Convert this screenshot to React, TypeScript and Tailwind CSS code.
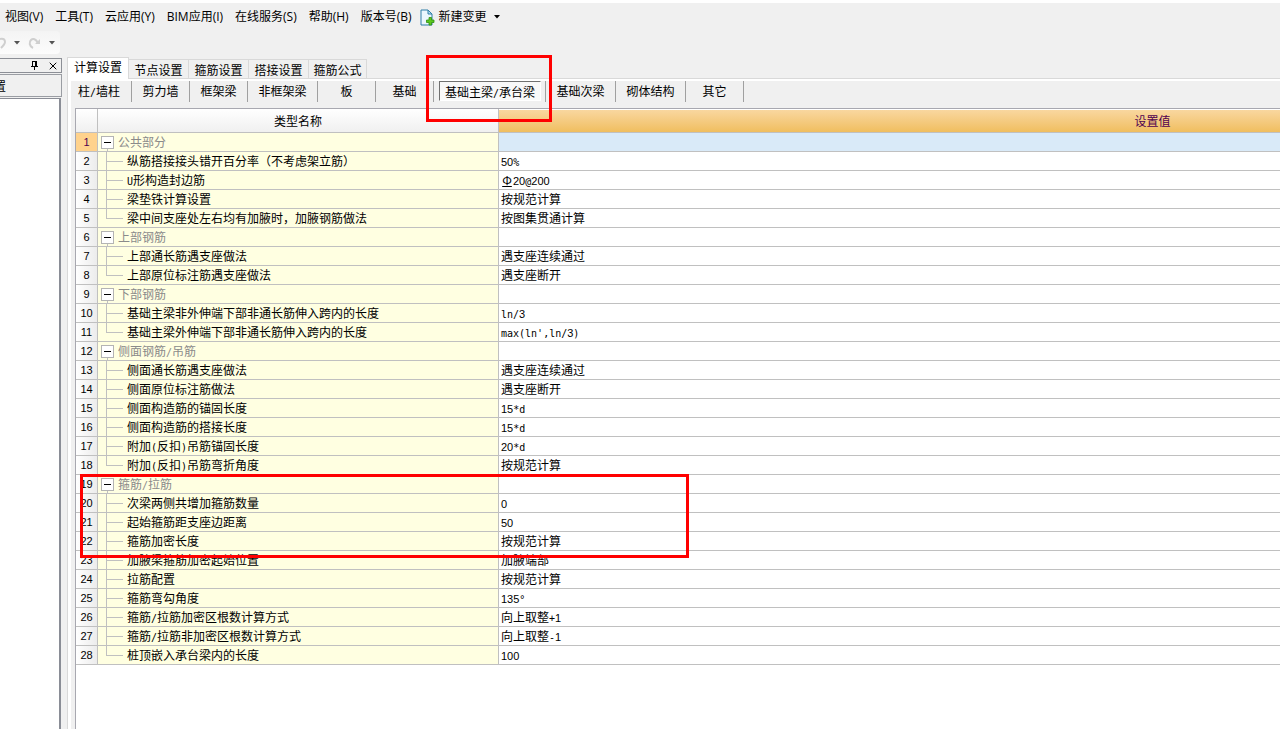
import { X } from "lucide-react"

interface Row {
  name: string
  value?: string
  group?: boolean
  last?: boolean
}

const menus = ["视图(V)", "工具(T)", "云应用(Y)", "BIM应用(I)", "在线服务(S)", "帮助(H)", "版本号(B)"]

const tabs = [
  { label: "计算设置", width: "w-[62px]" },
  { label: "节点设置", width: "w-[60px]" },
  { label: "箍筋设置", width: "w-[60px]" },
  { label: "搭接设置", width: "w-[60px]" },
  { label: "箍筋公式", width: "w-[58px]" },
]

const members = [
  { label: "柱/墙柱", width: "w-[61px] pr-1" },
  { label: "剪力墙", width: "w-[58px]" },
  { label: "框架梁", width: "w-[58px]" },
  { label: "非框架梁", width: "w-[70px]" },
  { label: "板", width: "w-[58px]" },
  { label: "基础", width: "w-[58px]" },
  { label: "基础主梁/承台梁", width: "w-[112px]" },
  { label: "基础次梁", width: "w-[70px]" },
  { label: "砌体结构", width: "w-[70px]" },
  { label: "其它", width: "w-[58px]" },
]

const rows: Row[] = [
  { name: "公共部分", group: true },
  { name: "纵筋搭接接头错开百分率（不考虑架立筋）", value: "50%" },
  { name: "U形构造封边筋", value: "Φ20@200" },
  { name: "梁垫铁计算设置", value: "按规范计算" },
  { name: "梁中间支座处左右均有加腋时，加腋钢筋做法", value: "按图集贯通计算", last: true },
  { name: "上部钢筋", group: true },
  { name: "上部通长筋遇支座做法", value: "遇支座连续通过" },
  { name: "上部原位标注筋遇支座做法", value: "遇支座断开", last: true },
  { name: "下部钢筋", group: true },
  { name: "基础主梁非外伸端下部非通长筋伸入跨内的长度", value: "ln/3" },
  { name: "基础主梁外伸端下部非通长筋伸入跨内的长度", value: "max(ln',ln/3)", last: true },
  { name: "侧面钢筋/吊筋", group: true },
  { name: "侧面通长筋遇支座做法", value: "遇支座连续通过" },
  { name: "侧面原位标注筋做法", value: "遇支座断开" },
  { name: "侧面构造筋的锚固长度", value: "15*d" },
  { name: "侧面构造筋的搭接长度", value: "15*d" },
  { name: "附加(反扣)吊筋锚固长度", value: "20*d" },
  { name: "附加(反扣)吊筋弯折角度", value: "按规范计算", last: true },
  { name: "箍筋/拉筋", group: true },
  { name: "次梁两侧共增加箍筋数量", value: "0" },
  { name: "起始箍筋距支座边距离", value: "50" },
  { name: "箍筋加密长度", value: "按规范计算" },
  { name: "加腋梁箍筋加密起始位置", value: "加腋端部" },
  { name: "拉筋配置", value: "按规范计算" },
  { name: "箍筋弯勾角度", value: "135°" },
  { name: "箍筋/拉筋加密区根数计算方式", value: "向上取整+1" },
  { name: "箍筋/拉筋非加密区根数计算方式", value: "向上取整-1" },
  { name: "桩顶嵌入承台梁内的长度", value: "100", last: true },
]

// Latin runs take half the width of a Chinese character
function Mixed({ text }: { text: string }) {
  return (
    <>
      {text.split(/(\d+|[\x20-\x2f\x3a-\x7e°]+|Φ)/).map((part, i) => {
        if (i % 2 === 0) return part
        if (part === "Φ") {
          return (
            <span key={i} className="inline-block w-3 text-center leading-none underline">
              {part}
            </span>
          )
        }
        return /\d/.test(part) ? (
          <span key={i} className="font-['Liberation_Sans',sans-serif] text-[11px] leading-none">
            {part}
          </span>
        ) : (
          <span key={i} className="font-['DejaVu_Sans_Mono',monospace] text-[10px] leading-none">
            {part}
          </span>
        )
      })}
    </>
  )
}

function Caret({ className }: { className: string }) {
  return (
    <svg className={className} width="6" height="4" viewBox="0 0 6 4" fill="currentColor">
      <path d="M0 0h6L3 3.5z" />
    </svg>
  )
}

function NewDocIcon() {
  return (
    <svg width="15" height="17" viewBox="0 0 15 17">
      <path d="M1 1h7l4 4v11H1z" fill="#eaf6fd" stroke="#2f7fa8" />
      <path d="M8 1v4h4z" fill="#b5dcf0" stroke="#2f7fa8" />
      <path d="M9 8.500h2.500V11H14v2.500h-2.500V16H9v-2.500H6.500V11H9z" fill="#5cc81e" stroke="#2f8f12" strokeWidth="0.8" />
    </svg>
  )
}

function MenuBar() {
  return (
    <nav className="flex h-[31px] items-center gap-3 border-t-[3px] border-white pl-[5px] font-['Open_Sans','Noto_Sans_CJK_SC',sans-serif]">
      {menus.map((m) => (
        <button key={m} className="whitespace-nowrap">
          {m}
        </button>
      ))}
      <button className="-ml-1 flex items-center gap-1 whitespace-nowrap">
        <NewDocIcon />
        新建变更
        <Caret className="ml-[3px]" />
      </button>
    </nav>
  )
}

function ToolBar() {
  return (
    <div className="flex h-[23px] w-[60px] items-center rounded-r bg-linear-to-b from-[#f4f4f4] to-[#fcfcfc]">
      <button aria-label="撤销" className="flex items-center text-[#cfcfcf]">
        <svg width="7" height="12" viewBox="0 0 7 12" fill="none" stroke="currentColor" strokeWidth="2">
          <path d="M0 2c4-1 5 1 5 3S3 9 1 11" />
        </svg>
        <Caret className="ml-[7px] text-[#555]" />
      </button>
      <button aria-label="恢复" className="ml-2 flex items-center text-[#cfcfcf]">
        <svg width="14" height="12" viewBox="0 0 14 12" fill="none" stroke="currentColor" strokeWidth="2">
          <path d="M5 11C1 9 1 5 3 3s5-1 7 3" />
          <path d="M12 2v5H7z" fill="currentColor" stroke="none" />
        </svg>
        <Caret className="ml-[7px] text-[#555]" />
      </button>
    </div>
  )
}

function SidePanel() {
  return (
    <aside className="flex w-[62px] shrink-0 flex-col">
      <div className="flex h-[15px] items-center justify-end gap-[8px] border border-l-0 border-[#8c8f96] pr-[2px]">
        <button aria-label="固定">
          <svg width="9" height="9" viewBox="0 0 9 9" fill="none" stroke="#000">
            <path d="M2.500 0v5M2 .5h4M5.500 0v5M6.500 0v5M1 5.500h7M4.500 6v3" />
          </svg>
        </button>
        <button aria-label="关闭">
          <X className="h-[12px] w-[12px]" strokeWidth={2} />
        </button>
      </div>
      <div className="mt-px flex h-[23px] items-center overflow-hidden border border-l-0 border-[#9a9da3]">
        <span className="-ml-[6px]">置</span>
      </div>
      <div className="mr-px mt-px flex-1 border-r-2 border-t border-[#8a8d96] bg-white" />
    </aside>
  )
}

function MemberTabs() {
  return (
    <div className="flex h-[21px]">
      {members.map((m) => {
        const active = m.label === "基础主梁/承台梁"
        return (
          <div key={m.label} className={`shrink-0 border-r border-[#a0a0a0] ${m.width}`}>
            {active ? (
              <button
                aria-pressed="true"
                className="ml-[5px] block h-[20px] w-[102px] whitespace-nowrap border border-b-white border-l-[#707070] border-r-white border-t-[#707070] bg-[#f8f8f8] text-center leading-[20px]"
              >
                <Mixed text={m.label} />
              </button>
            ) : (
              <button className="block h-[20px] w-full whitespace-nowrap text-center leading-[20px]">
                <Mixed text={m.label} />
              </button>
            )}
          </div>
        )
      })}
    </div>
  )
}

function NameCell({ row }: { row: Row }) {
  if (row.group) {
    return (
      <div className="flex h-[18px] pl-[3px] text-[#8a8a8a]">
        <div className="flex flex-col items-center justify-end">
          <button aria-label="折叠" className="flex h-[13px] w-[13px] items-center justify-center border border-[#b4b4b4] bg-white">
            <span className="h-px w-[7px] bg-black" />
          </button>
          <span className="h-[2px] w-px bg-[#c0c0c0]" />
        </div>
        <span className="ml-1 leading-[18px]">
          <Mixed text={row.name} />
        </span>
      </div>
    )
  }
  return (
    <div className="flex h-[18px] pl-2">
      <div className="w-[17px]">
        <div className="h-[10px] border-b border-l border-[#c0c0c0]" />
        {!row.last && <div className="h-[8px] border-l border-[#c0c0c0]" />}
      </div>
      <span className="ml-1 whitespace-nowrap leading-[18px]">
        <Mixed text={row.name} />
      </span>
    </div>
  )
}

function SettingsTable() {
  return (
    <table className="w-[1730px] table-fixed border-separate border-spacing-0">
      <colgroup>
        <col className="w-[22px]" />
        <col className="w-[401px]" />
        <col />
      </colgroup>
      <thead>
        <tr className="h-[24px]">
          <th className="border-b border-r border-[#c0c0c0] bg-linear-to-b from-white to-[#f0f0f0] p-0" />
          <th className="border-b border-r border-[#c0c0c0] bg-linear-to-b from-white to-[#f0f0f0] p-0 font-normal">
            类型名称
          </th>
          <th className="border-b border-t border-b-[#c0c0c0] border-t-white bg-linear-to-b from-[#f9d79f] to-[#f0be5e] p-0 font-normal text-[#500050]">
            设置值
          </th>
        </tr>
      </thead>
      <tbody>
        {rows.map((row, i) => (
          <tr key={i}>
            <th
              scope="row"
              className={`h-[19px] border-b border-r border-[#c0c0c0] p-0 text-center font-['Liberation_Sans',sans-serif] text-[11px] font-normal leading-[18px] ${
                i === 0 ? "bg-[#ffd28c] text-[#500050]" : "bg-linear-to-r from-white to-[#ececec]"
              }`}
            >
              {i + 1}
            </th>
            <td className="border-b border-r border-[#c0c0c0] bg-[#ffffe1] p-0">
              <NameCell row={row} />
            </td>
            <td className={`border-b border-[#c0c0c0] p-0 pl-[2px] leading-[18px] ${i === 0 ? "bg-[#d9eaf8]" : "bg-white"}`}>
              {row.value && <Mixed text={row.value} />}
            </td>
          </tr>
        ))}
      </tbody>
    </table>
  )
}

export default function App() {
  return (
    <div className="relative flex min-h-screen flex-col overflow-hidden bg-[#f0f0f0] font-['Noto_Sans_CJK_SC',sans-serif] text-[12px] leading-[18px] text-black">
      <MenuBar />
      <ToolBar />
      <div className="flex flex-1 pt-1">
        <SidePanel />
        <main className="ml-[5px] flex min-w-0 flex-1 flex-col">
          <div className="flex h-[21px] items-end border-b border-[#d9d9d9]" role="tablist">
            {tabs.map((t, i) => (
              <button
                key={t.label}
                role="tab"
                aria-selected={i === 0}
                className={`shrink-0 border-t border-r border-[#d9d9d9] text-center ${t.width} ${
                  i === 0 ? "-mb-px h-[22px] border-l bg-white pb-1" : "h-[19px] leading-[17px]"
                }`}
              >
                {t.label}
              </button>
            ))}
          </div>
          <div className="flex flex-1 flex-col border-l border-[#d9d9d9]">
            <div className="flex flex-1 flex-col border-l-[3px] border-t-2 border-white">
              <MemberTabs />
              <div className="ml-1 mt-[6px] min-w-0 flex-1 overflow-hidden border-l border-t border-[#a8a8b0] bg-white">
                <SettingsTable />
              </div>
            </div>
          </div>
        </main>
      </div>
      {/* highlight frames */}
      <div className="pointer-events-none absolute left-[426px] top-[55px] h-[67px] w-[126px] border-[3px] border-[#ff0000]" />
      <div className="pointer-events-none absolute left-[80px] top-[474px] h-[84px] w-[609px] border-[3px] border-[#ff0000]" />
    </div>
  )
}
